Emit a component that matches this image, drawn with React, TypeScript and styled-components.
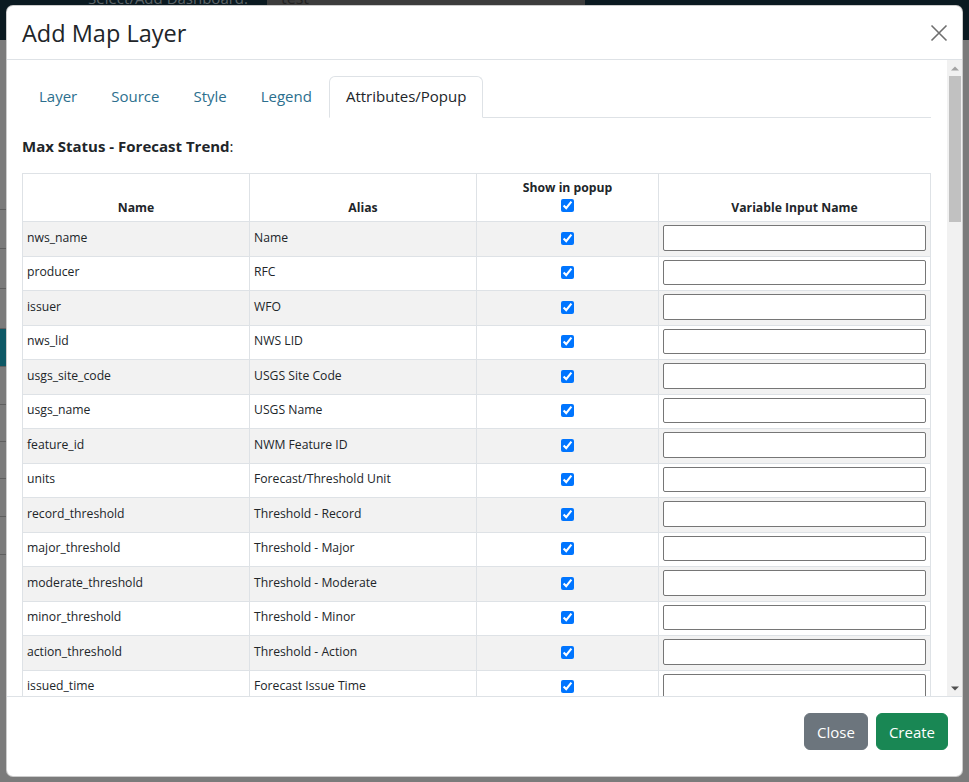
import React from "react";
import styled, { createGlobalStyle } from "styled-components";

const GlobalStyle = createGlobalStyle`
  html, body { margin: 0; padding: 0; height: 100%; }
  body {
    font-family: "Open Sans", "Noto Sans", "Liberation Sans", sans-serif;
    background: #7b7b7b;
    overflow: hidden;
  }
  * { box-sizing: border-box; }
`;

const Page = styled.div`
  width: 969px;
  height: 782px;
  position: relative;
  overflow: hidden;
  background: #7b7b7b;
`;

const TopBar = styled.div`
  height: 40px;
  background: #0b1a21;
  display: flex;
  align-items: flex-start;
  padding-left: 88px;
  gap: 19px;
`;

const TopLabel = styled.span`
  color: #5d6468;
  font-size: 15px;
  line-height: 1;
  margin-top: -9px;
`;

const TopSelect = styled.div`
  width: 318px;
  height: 40px;
  background: #3d3d3d;
  color: #222;
  font-size: 16px;
  line-height: 1;
  padding: 0 14px;
  margin-top: -10px;
`;

const SideList = styled.div`
  display: flex;
  flex-direction: column;
  width: 6px;
  padding-top: 132px;
`;

const SideRow = styled.div<{ $teal?: boolean; $h: number }>`
  height: ${(p) => p.$h}px;
  border-bottom: 1px solid #5f5f5f;
  background: ${(p) => (p.$teal ? "#0d5865" : "transparent")};
`;

const Modal = styled.div`
  position: absolute;
  left: 6px;
  top: 5px;
  width: 957px;
  height: 772px;
  background: #fff;
  border: 1px solid rgba(0, 0, 0, 0.2);
  border-radius: 7px;
  display: flex;
  flex-direction: column;
  overflow: hidden;
`;

const Header = styled.div`
  height: 54px;
  flex: none;
  display: flex;
  align-items: center;
  justify-content: space-between;
  padding: 0 14px 0 15px;
  border-bottom: 1px solid #dee2e6;
`;

const Title = styled.h5`
  margin: 2px 0 0;
  font-size: 23.5px;
  font-weight: 500;
  color: #212529;
  line-height: 1.2;
`;

const CloseX = styled.button`
  border: 0;
  background: transparent;
  padding: 0;
  width: 18px;
  height: 18px;
  display: flex;
  cursor: pointer;
`;

const BodyWrap = styled.div`
  flex: 1;
  min-height: 0;
  display: flex;
`;

const Body = styled.div`
  flex: 1;
  min-width: 0;
  overflow: hidden;
  padding: 16px 16px 16px 15px;
  color: #212529;
`;

const ScrollBar = styled.div`
  width: 15px;
  flex: none;
  background: #f1f1f1;
  display: flex;
  flex-direction: column;
`;

const ScrollArrow = styled.div`
  height: 16px;
  flex: none;
  display: flex;
  align-items: center;
  justify-content: center;
`;

const ScrollTrack = styled.div`
  flex: 1;
  padding: 0 1px 0 2px;
`;

const ScrollThumb = styled.div`
  height: 146px;
  background: #c1c1c1;
`;

const Tabs = styled.ul`
  list-style: none;
  margin: 0;
  padding: 0;
  display: flex;
  border-bottom: 1px solid #dee2e6;
`;

const Tab = styled.li<{ $active?: boolean }>`
  margin-bottom: -1px;
  padding: 7px 16px 8px;
  font-size: 15px;
  line-height: 25px;
  border: 1px solid ${(p) => (p.$active ? "#dee2e6" : "transparent")};
  border-bottom-color: ${(p) => (p.$active ? "#fff" : "transparent")};
  border-radius: 6px 6px 0 0;
  background: #fff;
  color: ${(p) => (p.$active ? "#212529" : "#2c6f8e")};
`;

const Heading = styled.div`
  margin: 17px 0 16px;
  font-size: 15px;
  line-height: 22px;
  color: #212529;
`;

const Strong = styled.strong`
  font-weight: 700;
`;

const Table = styled.table`
  width: 100%;
  border-collapse: collapse;
  font-size: 12.2px;
  color: #212529;
`;

const Th = styled.th<{ $w?: number }>`
  border: 1px solid #dee2e6;
  padding: 4px;
  height: 48px;
  vertical-align: bottom;
  text-align: center;
  font-weight: 700;
  line-height: 18px;
  width: ${(p) => (p.$w ? `${p.$w}px` : "auto")};
`;

const HeadCheck = styled.input`
  display: block;
  margin: 2px auto 5px;
  width: 13px;
  height: 13px;
`;

const Tr = styled.tr<{ $odd: boolean }>`
  background: ${(p) => (p.$odd ? "#f2f2f2" : "#fff")};
`;

const Td = styled.td<{ $center?: boolean }>`
  border: 1px solid #dee2e6;
  height: 34.5px;
  vertical-align: middle;
  text-align: ${(p) => (p.$center ? "center" : "left")};
  line-height: 18px;
  padding: ${(p) => (p.$center ? "3px 4px 5px" : "3px 4px 5px")};
`;

const RowCheck = styled.input`
  width: 13px;
  height: 13px;
  margin: 0;
  vertical-align: middle;
`;

const TextInput = styled.input`
  display: block;
  width: 100%;
  height: 25.5px;
  border: 1px solid #767676;
  border-radius: 2px;
  background: #fff;
  font-size: 13px;
  padding: 1px 2px;
`;

const Footer = styled.div`
  flex: none;
  height: 80px;
  border-top: 1px solid #dee2e6;
  display: flex;
  justify-content: flex-end;
  align-items: flex-start;
  gap: 8px;
  padding: 16px 14px 0 0;
`;

const Btn = styled.button<{ $variant: "secondary" | "success" }>`
  border: 1px solid ${(p) => (p.$variant === "secondary" ? "#6c757d" : "#198754")};
  background: ${(p) => (p.$variant === "secondary" ? "#6c757d" : "#198754")};
  color: #fff;
  font-family: inherit;
  font-size: 15px;
  line-height: 24px;
  height: 37px;
  padding: 6px 12px 5px;
  border-radius: 6px;
  cursor: pointer;
`;

const rows: [string, string][] = [
  ["nws_name", "Name"],
  ["producer", "RFC"],
  ["issuer", "WFO"],
  ["nws_lid", "NWS LID"],
  ["usgs_site_code", "USGS Site Code"],
  ["usgs_name", "USGS Name"],
  ["feature_id", "NWM Feature ID"],
  ["units", "Forecast/Threshold Unit"],
  ["record_threshold", "Threshold - Record"],
  ["major_threshold", "Threshold - Major"],
  ["moderate_threshold", "Threshold - Moderate"],
  ["minor_threshold", "Threshold - Minor"],
  ["action_threshold", "Threshold - Action"],
  ["issued_time", "Forecast Issue Time"],
  ["generation_time", "Forecast Generation Time"],
  ["initial_value", "Initial Value"],
  ["initial_status", "Initial Status"],
  ["max_value", "Max Value"],
  ["max_status", "Max Status"],
  ["max_value_timestamp", "Max Value Timestamp"],
  ["trend", "Forecast Trend"],
];

export default function App() {
  const sideRows = [
    { h: 38 }, { h: 39 }, { h: 40 }, { h: 40 }, { h: 38, teal: true }, { h: 38 }, { h: 37 }, { h: 37 }, { h: 38 }, { h: 38 },
  ];
  return (
    <Page>
      <GlobalStyle />
      <TopBar>
        <TopLabel>Select/Add Dashboard:</TopLabel>
        <TopSelect>test</TopSelect>
      </TopBar>
      <SideList>
        {sideRows.map((r, i) => (
          <SideRow key={i} $h={r.h} $teal={r.teal} />
        ))}
      </SideList>
      <Modal>
        <Header>
          <Title>Add Map Layer</Title>
          <CloseX aria-label="Close">
            <svg width="18" height="18" viewBox="0 0 18 18">
              <path d="M1.5 1.5 L16.5 16.5 M16.5 1.5 L1.5 16.5" stroke="#6f6f6f" strokeWidth="1.6" fill="none" />
            </svg>
          </CloseX>
        </Header>
        <BodyWrap>
          <Body>
            <Tabs>
              <Tab>Layer</Tab>
              <Tab>Source</Tab>
              <Tab>Style</Tab>
              <Tab>Legend</Tab>
              <Tab $active>Attributes/Popup</Tab>
            </Tabs>
            <Heading>
              <Strong>Max Status - Forecast Trend</Strong>:
            </Heading>
            <Table>
              <thead>
                <tr>
                  <Th $w={227}>Name</Th>
                  <Th $w={227}>Alias</Th>
                  <Th $w={182}>
                    Show in popup
                    <HeadCheck type="checkbox" defaultChecked />
                  </Th>
                  <Th>Variable Input Name</Th>
                </tr>
              </thead>
              <tbody>
                {rows.map(([name, alias], i) => (
                  <Tr key={name} $odd={i % 2 === 0}>
                    <Td>{name}</Td>
                    <Td>{alias}</Td>
                    <Td $center>
                      <RowCheck type="checkbox" defaultChecked />
                    </Td>
                    <Td>
                      <TextInput type="text" />
                    </Td>
                  </Tr>
                ))}
              </tbody>
            </Table>
          </Body>
          <ScrollBar>
            <ScrollArrow>
              <svg width="8" height="5" viewBox="0 0 8 5">
                <path d="M0 4.5 L4 0.5 L8 4.5 Z" fill="#a3a3a3" />
              </svg>
            </ScrollArrow>
            <ScrollTrack>
              <ScrollThumb />
            </ScrollTrack>
            <ScrollArrow>
              <svg width="8" height="5" viewBox="0 0 8 5">
                <path d="M0 0.5 L8 0.5 L4 4.5 Z" fill="#505050" />
              </svg>
            </ScrollArrow>
          </ScrollBar>
        </BodyWrap>
        <Footer>
          <Btn $variant="secondary">Close</Btn>
          <Btn $variant="success">Create</Btn>
        </Footer>
      </Modal>
    </Page>
  );
}
